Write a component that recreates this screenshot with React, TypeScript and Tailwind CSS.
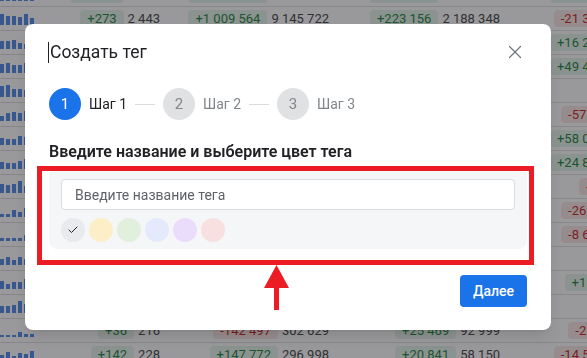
import { X, Check } from "lucide-react";

type Cell = [string, string] | null;
type Row = { bars: number[]; c1: Cell; c2: Cell; c3: Cell; c4: Cell };

const rows: Row[] = [
  { bars: [6, 9, 7, 10, 8, 11], c1: ["+2 173", "3 102"], c2: ["+1 245 803", "9 874 110"], c3: ["+245 918", "2 211 906"], c4: ["+12 044", "10 551 239"] },
  { bars: [11, 9, 9, 8, 11, 7], c1: ["+273", "2 443"], c2: ["+1 009 564", "9 145 722"], c3: ["+223 156", "2 188 348"], c4: ["-21 348", "12 345 678"] },
  { bars: [8, 8, 9, 6, 5, 9], c1: null, c2: null, c3: null, c4: ["+16 274", "12 902 415"] },
  { bars: [9, 10, 8, 8, 10, 6], c1: null, c2: null, c3: null, c4: ["+49 418", "12 561 007"] },
  { bars: [11, 12, 8, 8, 7, 10], c1: null, c2: null, c3: null, c4: null },
  { bars: [5, 8, 9, 8, 10, 6], c1: null, c2: null, c3: null, c4: ["-57 106", "3 460 218"] },
  { bars: [7, 6, 6, 9, 8, 5], c1: null, c2: null, c3: null, c4: ["+58 012", "12 771 903"] },
  { bars: [7, 6, 6, 8, 10, 7], c1: null, c2: null, c3: null, c4: ["+24 815", "11 482 316"] },
  { bars: [9, 8, 9, 12, 7, 6], c1: null, c2: null, c3: null, c4: ["-4 512", "873 104"] },
  { bars: [3, 3, 7, 5, 9, 4], c1: null, c2: null, c3: null, c4: ["-26 118", "2 948 331"] },
  { bars: [3, 3, 3, 3, 6, 4], c1: null, c2: null, c3: null, c4: ["-8 604", "10 214 775"] },
  { bars: [6, 8, 5, 8, 6, 9], c1: null, c2: null, c3: null, c4: null },
  { bars: [8, 5, 7, 7, 10, 6], c1: null, c2: null, c3: null, c4: ["+1 172", "4 117 092"] },
  { bars: [7, 7, 8, 12, 9, 8], c1: null, c2: null, c3: null, c4: null },
  { bars: [2, 2, 2, 5, 3, 3], c1: ["+36", "216"], c2: ["-142 497", "302 629"], c3: ["+25 469", "92 999"], c4: ["-2 391", "1 204 558"] },
  { bars: [6, 9, 5, 8, 7, 10], c1: ["+142", "228"], c2: ["+147 772", "296 998"], c3: ["+20 841", "58 150"], c4: ["-14 503", "11 620 480"] },
];

function Delta({ cell }: { cell: Cell }) {
  if (!cell) return null;
  const up = cell[0].startsWith("+");
  return (
    <div className="flex items-center justify-end gap-1">
      <span
        className={
          up
            ? "rounded bg-[#e6f4ea] px-[7px] leading-[17px] text-[#188038]"
            : "rounded bg-[#fce8e6] px-[7px] leading-[17px] text-[#c5221f]"
        }
      >
        {cell[0]}
      </span>
      <span className="text-[#3c4043]">{cell[1]}</span>
    </div>
  );
}

function Table() {
  return (
    <div className="mt-[-17px] w-[700px] text-[13px] whitespace-nowrap">
      {rows.map((r, i) => (
        <div key={i} className="flex h-6 items-center border-b border-[#e0e0e0]">
          <div className="flex h-full w-[40px] items-end gap-[2px] pb-[5px]">
            {r.bars.map((h, j) => (
              <div key={j} className="w-[4px] bg-[#4a86e8]" style={{ height: h }} />
            ))}
          </div>
          <div className="w-[120px]"><Delta cell={r.c1} /></div>
          <div className="w-[169px]"><Delta cell={r.c2} /></div>
          <div className="w-[171px]"><Delta cell={r.c3} /></div>
          <div className="w-[180px]"><Delta cell={r.c4} /></div>
        </div>
      ))}
    </div>
  );
}

function Step({ n, label, active }: { n: number; label: string; active?: boolean }) {
  return (
    <div className="flex items-center gap-2">
      <div
        className={
          active
            ? "grid size-8 place-items-center rounded-full bg-[#1a73e8] text-[15px] text-white"
            : "grid size-8 place-items-center rounded-full bg-[#e0e1e3] text-[15px] text-[#80868b]"
        }
      >
        {n}
      </div>
      <span className={active ? "text-sm text-[#202124]" : "text-sm text-[#80868b]"}>{label}</span>
    </div>
  );
}

const swatches = ["#e8eaed", "#fcefc8", "#e1f0dc", "#e4e9fc", "#eadcfb", "#f9e0e0"];

export default function App() {
  return (
    <div className="relative h-[358px] w-[587px] overflow-hidden bg-white font-['Roboto',sans-serif]">
      <Table />
      <div className="fixed inset-0 bg-[rgba(32,33,36,0.46)]" />

      <div className="fixed left-[25px] top-[24px] flex h-[306px] w-[526px] flex-col rounded-lg bg-white px-6 pt-4 pb-[23px] shadow-lg">
        <div className="flex h-6 items-center justify-between">
          <div className="-ml-px flex items-center">
            <span className="mr-[1px] h-[21px] w-px bg-[#202124]" />
            <h2 className="text-[17.5px] text-[#202124]">Создать тег</h2>
          </div>
          <button className="mr-[1px] text-[#70757a]">
            <X size={22} strokeWidth={1.3} />
          </button>
        </div>

        <div className="mt-6 flex items-center">
          <Step n={1} label="Шаг 1" active />
          <div className="mx-2 h-px w-5 bg-[#dadce0]" />
          <Step n={2} label="Шаг 2" />
          <div className="mx-2 h-px w-5 bg-[#dadce0]" />
          <Step n={3} label="Шаг 3" />
        </div>

        <h3 className="mt-[22px] text-base leading-5 font-semibold text-[#202124]">
          Введите название и выберите цвет тега
        </h3>

        <div className="mt-[5px] rounded-lg bg-[#f5f6f8] px-3 pt-3 pb-[7px]">
          <input
            placeholder="Введите название тега"
            className="h-[31px] w-full rounded border border-[#dadce0] bg-white px-[13px] text-sm text-[#202124] outline-none placeholder:text-[#5f6368]"
          />
          <div className="mt-2 flex gap-1">
            {swatches.map((c, i) => (
              <div key={c} className="grid size-6 place-items-center rounded-full" style={{ background: c }}>
                {i === 0 && <Check size={12} strokeWidth={2} className="text-[#202124]" />}
              </div>
            ))}
          </div>
        </div>

        <button className="mt-auto h-8 self-end rounded bg-[#1a73e8] px-[13px] text-sm font-medium text-white">
          Далее
        </button>
      </div>

      {/* annotation */}
      <div className="fixed left-[37px] top-[166px] h-[99px] w-[497px] border-[5px] border-[#ec1c24]" />
      <svg className="fixed left-[263px] top-[264px]" width="27" height="46" viewBox="0 0 27 46">
        <polygon points="13.5,1 26,24 1,24" fill="#ec1c24" />
        <rect x="11" y="22" width="5" height="24" fill="#ec1c24" />
      </svg>
    </div>
  );
}
